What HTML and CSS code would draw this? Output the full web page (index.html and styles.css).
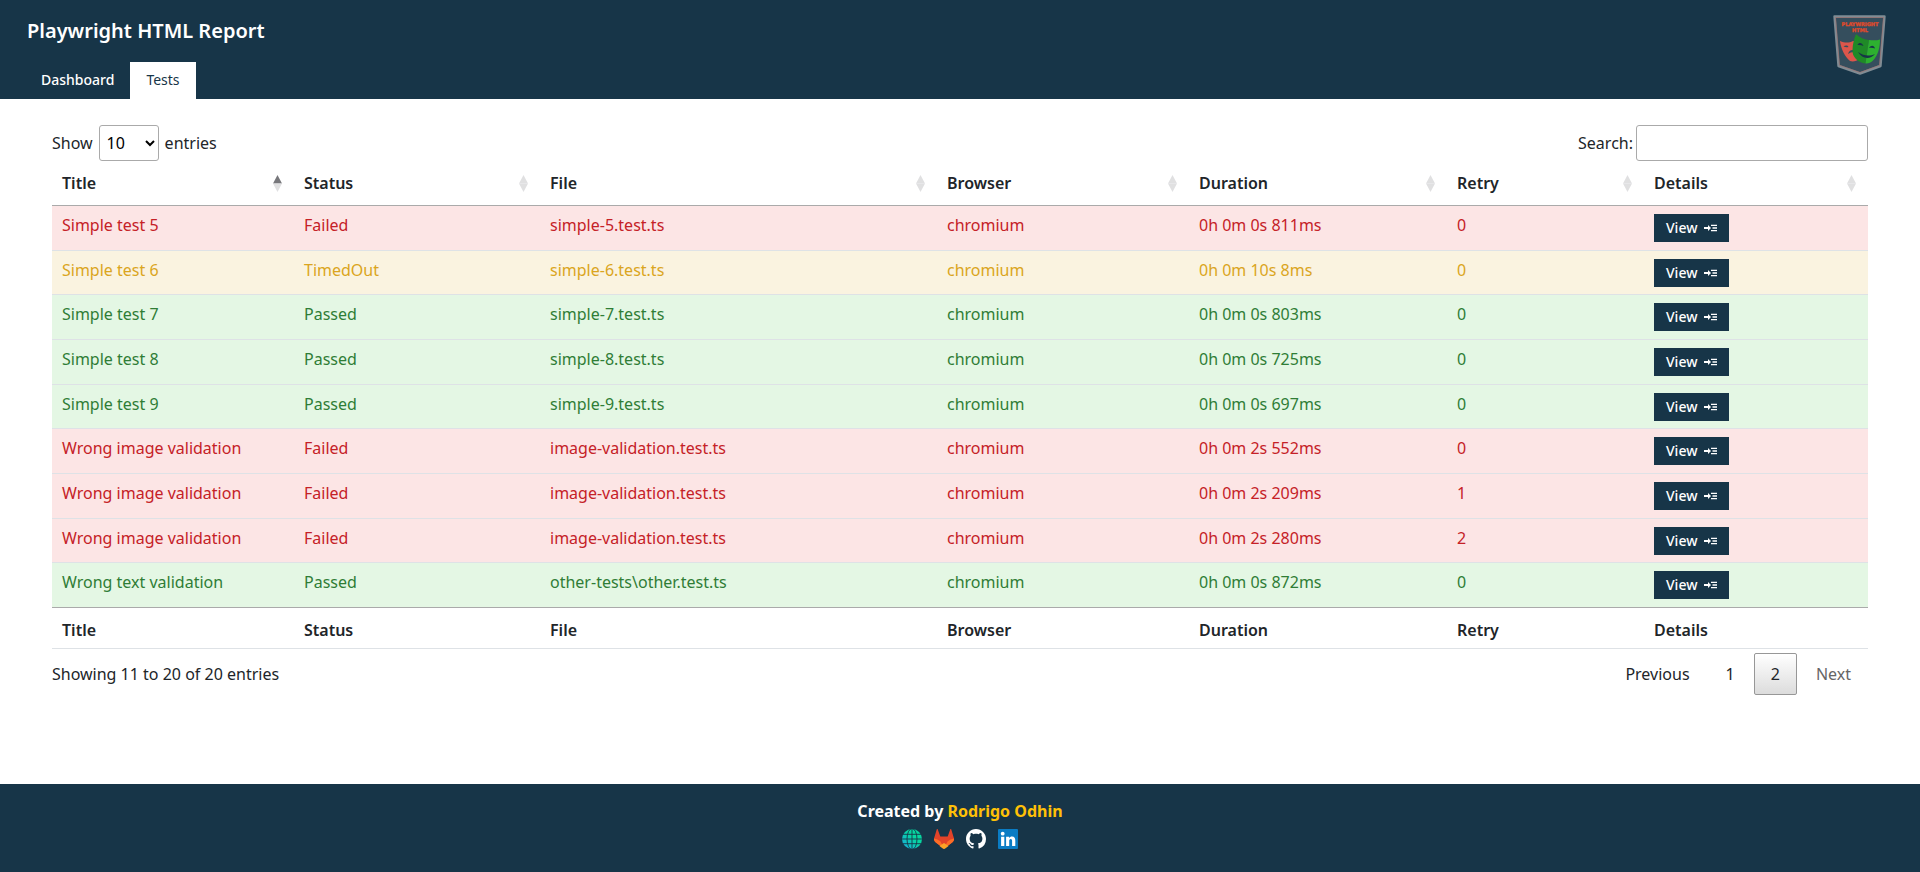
FILE: index.html
```html
<!DOCTYPE html>
<html lang="en">
<head>
<meta charset="utf-8">
<meta name="viewport" content="width=device-width, initial-scale=1">
<title>Playwright HTML Report</title>
<link rel="stylesheet" href="styles.css">
</head>
<body>
<svg class="sprite" aria-hidden="true">
  <symbol id="open" viewBox="0 0 13 8"><path d="M0 3h4V1l3 3-3 3V5H0zM7 .7h6v1.300H7zM8.500 3.350H13v1.300H8.500zM7 6h6v1.300H7z"/></symbol>
  <symbol id="sort" viewBox="0 0 9 17"><path class="up" d="M4.500 0L9 8.500H0z"/><path class="down" d="M0 8.500h9L4.500 17z"/></symbol>
</svg>
<header class="top">
  <div class="top-main">
    <h1 class="brand">Playwright HTML Report</h1>
    <nav class="tabs">
      <a class="tab" href="#dashboard">Dashboard</a>
      <a class="tab active" href="#tests" aria-current="page">Tests</a>
    </nav>
  </div>
  <svg class="logo" viewBox="0 0 54 60" role="img" aria-label="Playwright HTML">
    <path d="M1.500 1.500H51.500L47.500 51 27 58.500 5.500 51z" fill="#354e5d" stroke="#7f8c94" stroke-width="2.400" stroke-linejoin="round"/>
    <path d="M2.500 2.500H50.500L46.500 50.300 27 57.500 6.500 50.300z" fill="none" stroke="#a66f6c" stroke-width=".6"/>
    <text x="27" y="10.500" text-anchor="middle" class="logo-text">PLAYWRIGHT</text>
    <text x="27" y="16.500" text-anchor="middle" class="logo-text">HTML</text>
    <path d="M7 26c5 2 9 2 13 0h3l3 18c-2 2-6 3-9 2C12 42 8 34 7 26z" fill="#dc564b"/>
    <path d="M10.500 31.500c2-1.500 4-1.500 5 .4-2 .5-3 .3-5-.4zM15 39c1-3.500 3-4.500 5.500-4l.5 2c-3 0-4 .8-6 2z" fill="#354e5d"/>
    <path d="M23 19c4 4 8 5.500 13 6l-4 38c.5 0-.5 0 0 0l0-15c-8-2-13-7-13-13 0-6 2-11 4-16z" fill="none"/>
    <path d="M23 19c4 4 8 5.500 13 6l-3.500 23.500C25 47.500 19 42 19.500 35c.2-6 1.500-11 3.500-16z" fill="#1f8a27"/>
    <path d="M36 25c4 .5 8 .5 11-.5 0 8-2 16-7 21-2 2.300-5 3.300-7.500 3z" fill="#2db030"/>
    <path d="M24.500 30c1.500-3 4.500-2.500 6 1-2-1-4-1.300-6-1zM36 33c2-3 5-3 6 .5-2-.8-4-.8-6-.5zM25 37c6 4 11 4.500 17 2-5 6-13 5-17-2z" fill="#173548"/>
  </svg>
</header>

<main class="content">
  <div class="bar">
    <label class="length">Show
      <select class="field"><option>10</option><option>25</option><option>50</option><option>100</option></select>
      entries</label>
    <label class="search">Search:<input class="field" type="search"></label>
  </div>
  <table class="tests">
    <colgroup><col class="c-title"><col class="c-status"><col class="c-file"><col class="c-browser"><col class="c-duration"><col class="c-retry"><col class="c-details"></colgroup>
    <thead>
      <tr>
        <th aria-sort="ascending"><div class="th">Title<svg class="sort asc"><use href="#sort"/></svg></div></th>
        <th><div class="th">Status<svg class="sort"><use href="#sort"/></svg></div></th>
        <th><div class="th">File<svg class="sort"><use href="#sort"/></svg></div></th>
        <th><div class="th">Browser<svg class="sort"><use href="#sort"/></svg></div></th>
        <th><div class="th">Duration<svg class="sort"><use href="#sort"/></svg></div></th>
        <th><div class="th">Retry<svg class="sort"><use href="#sort"/></svg></div></th>
        <th><div class="th">Details<svg class="sort"><use href="#sort"/></svg></div></th>
      </tr>
    </thead>
    <tbody>
      <tr class="failed"><td>Simple test 5</td><td>Failed</td><td>simple-5.test.ts</td><td>chromium</td><td>0h 0m 0s 811ms</td><td>0</td><td><button class="view" type="button">View <svg><use href="#open"/></svg></button></td></tr>
      <tr class="timedout"><td>Simple test 6</td><td>TimedOut</td><td>simple-6.test.ts</td><td>chromium</td><td>0h 0m 10s 8ms</td><td>0</td><td><button class="view" type="button">View <svg><use href="#open"/></svg></button></td></tr>
      <tr class="passed"><td>Simple test 7</td><td>Passed</td><td>simple-7.test.ts</td><td>chromium</td><td>0h 0m 0s 803ms</td><td>0</td><td><button class="view" type="button">View <svg><use href="#open"/></svg></button></td></tr>
      <tr class="passed"><td>Simple test 8</td><td>Passed</td><td>simple-8.test.ts</td><td>chromium</td><td>0h 0m 0s 725ms</td><td>0</td><td><button class="view" type="button">View <svg><use href="#open"/></svg></button></td></tr>
      <tr class="passed"><td>Simple test 9</td><td>Passed</td><td>simple-9.test.ts</td><td>chromium</td><td>0h 0m 0s 697ms</td><td>0</td><td><button class="view" type="button">View <svg><use href="#open"/></svg></button></td></tr>
      <tr class="failed"><td>Wrong image validation</td><td>Failed</td><td>image-validation.test.ts</td><td>chromium</td><td>0h 0m 2s 552ms</td><td>0</td><td><button class="view" type="button">View <svg><use href="#open"/></svg></button></td></tr>
      <tr class="failed"><td>Wrong image validation</td><td>Failed</td><td>image-validation.test.ts</td><td>chromium</td><td>0h 0m 2s 209ms</td><td>1</td><td><button class="view" type="button">View <svg><use href="#open"/></svg></button></td></tr>
      <tr class="failed"><td>Wrong image validation</td><td>Failed</td><td>image-validation.test.ts</td><td>chromium</td><td>0h 0m 2s 280ms</td><td>2</td><td><button class="view" type="button">View <svg><use href="#open"/></svg></button></td></tr>
      <tr class="passed"><td>Wrong text validation</td><td>Passed</td><td>other-tests\other.test.ts</td><td>chromium</td><td>0h 0m 0s 872ms</td><td>0</td><td><button class="view" type="button">View <svg><use href="#open"/></svg></button></td></tr>
    </tbody>
    <tfoot>
      <tr><th>Title</th><th>Status</th><th>File</th><th>Browser</th><th>Duration</th><th>Retry</th><th>Details</th></tr>
    </tfoot>
  </table>
  <div class="bar bar-bottom">
    <span>Showing 11 to 20 of 20 entries</span>
    <nav class="pages" aria-label="Pages">
      <button class="page" type="button">Previous</button>
      <button class="page" type="button">1</button>
      <button class="page current" type="button" aria-current="page">2</button>
      <button class="page" type="button" disabled>Next</button>
    </nav>
  </div>
</main>

<footer class="foot">
  <div class="credit">Created by <a href="#author">Rodrigo Odhin</a></div>
  <div class="social">
    <a href="#site" aria-label="Website"><svg viewBox="0 0 20 20">
      <defs><linearGradient id="g" x1="0" y1="1" x2="1" y2="0"><stop offset="0" stop-color="#1ba9e0"/><stop offset=".6" stop-color="#06d6a0"/></linearGradient></defs>
      <circle cx="10" cy="10" r="10" fill="url(#g)"/>
      <g fill="none" stroke="#173548" stroke-width=".9"><ellipse cx="10" cy="10" rx="5" ry="10.500"/><path d="M10 0v20M0 10h20M1 5.300h18M1 14.700h18"/></g>
    </svg></a>
    <a href="#gitlab" aria-label="GitLab"><svg viewBox="0 0 20 20">
      <path d="M3.700.3L6.300 7.500h7.400L16.300.3c.2-.4.700-.4.900 0L20 9.500c.2 1.500-.3 2.800-1.500 3.700L10 19.800l-8.500-6.600C.3 12.300-.2 11 0 9.500L2.800.3c.2-.4.700-.4.900 0z" fill="#e24329"/>
      <path d="M0 9.500c2.500.3 4.500 1.500 6.500 3L10 19.800l-8.500-6.600C.3 12.300-.2 11 0 9.500zM20 9.500c-2.500.3-4.500 1.500-6.500 3L10 19.800l8.500-6.600c1.200-.9 1.700-2.200 1.500-3.700z" fill="#fc6d26"/>
      <path d="M10 14l4.500 3-3.300 2.500c-.8.600-1.600.6-2.400 0L5.500 17z" fill="#fca326"/>
    </svg></a>
    <a href="#github" aria-label="GitHub"><svg viewBox="0 0 16 16"><path fill="#fff" d="M8 0C3.580 0 0 3.580 0 8c0 3.540 2.290 6.530 5.470 7.590.4.070.55-.17.55-.38 0-.19-.01-.82-.01-1.490-2.010.37-2.530-.49-2.690-.94-.09-.23-.48-.94-.82-1.130-.28-.15-.68-.52-.01-.53.63-.01 1.080.58 1.230.82.720 1.210 1.870.87 2.330.66.070-.52.280-.87.510-1.070-1.780-.2-3.640-.89-3.640-3.950 0-.87.310-1.590.82-2.150-.08-.2-.36-1.020.08-2.120 0 0 .67-.21 2.200.82.640-.18 1.320-.27 2-.27s1.360.09 2 .27c1.530-1.040 2.200-.82 2.200-.82.440 1.100.160 1.920.080 2.120.510.560.820 1.270.820 2.150 0 3.070-1.870 3.750-3.650 3.950.290.250.540.730.540 1.480 0 1.070-.010 1.930-.010 2.200 0 .210.150.460.550.380A8.010 8.010 0 0016 8c0-4.420-3.580-8-8-8z"/></svg></a>
    <a href="#linkedin" aria-label="LinkedIn"><svg viewBox="0 0 20 20"><rect width="20" height="20" rx="1" fill="#0a7cc4"/><circle cx="4.700" cy="4.700" r="1.900" fill="#fff"/><path fill="#fff" d="M3.100 7.800h3.200V17H3.100zM8.100 7.800h3v1.300c.6-1 1.600-1.600 2.900-1.600 2.600 0 3.300 1.700 3.300 4.200V17h-3.200v-4.700c0-1.200-.2-2.200-1.400-2.200s-1.500 1-1.500 2.200V17H8.100z"/></svg></a>
  </div>
</footer>
</body>
</html>
```
FILE: styles.css
```css
* { box-sizing: border-box; }
body {
  margin: 0;
  min-height: 100vh;
  display: flex;
  flex-direction: column;
  background: #fff;
  color: #212529;
  font: 400 16px/24px "Noto Sans", "Open Sans", sans-serif;
}
a { text-decoration: none; }
.sprite { display: none; }

.top {
  display: flex;
  justify-content: space-between;
  align-items: flex-start;
  padding: 15px 33px 0 27px;
  background: #173548;
  color: #fff;
}
.brand { margin: 0; font-size: 20px; line-height: 32px; font-weight: 600; }
.tabs { display: flex; margin-top: 15px; }
.tab { padding: 8px 16px 9px; color: #fff; font-size: 14px; line-height: 20px; font-weight: 500; }
.tab:first-child { padding-left: 14px; }
.tab.active { background: #fff; color: #173548; font-weight: 400; }
.logo { width: 54px; height: 60px; }
.logo-text { font: 700 5px "DejaVu Sans", sans-serif; fill: #e04a2a; stroke: #e04a2a; stroke-width: 0.3; }

.content { flex: 1; padding: 26px 52px; }
.bar { display: flex; justify-content: space-between; align-items: center; }
.bar label { display: flex; align-items: center; }
.length { gap: 6px; }
.search { gap: 3px; }
.field {
  height: 36px;
  padding: 5px;
  border: 1px solid #aaa;
  border-radius: 3px;
  background: transparent;
  font: inherit;
  color: #000;
}
select.field { width: 60px; padding: 4px 4px 4px 3px; }
input.field { width: 232px; }

.tests { width: 100%; table-layout: fixed; border-collapse: separate; border-spacing: 0; }
.c-title { width: 242px; }
.c-status { width: 246px; }
.c-file { width: 397px; }
.c-browser { width: 252px; }
.c-duration { width: 258px; }
.c-retry { width: 197px; }
.c-details { width: 224px; }
.tests th { text-align: left; font-weight: 600; }
thead th { padding: 10px 12px 10px 10px; border-bottom: 1px solid #aaa; }
.th { display: flex; justify-content: space-between; align-items: center; }
.sort { width: 9px; height: 17px; fill: #e0e0e1; }
.sort.asc { fill: #77777b; }
.down { fill: #e0e0e1; }
.tests td { padding: 7px 10px; border-bottom: 1px solid #dee2e6; vertical-align: top; }
tbody tr { height: 45px; }
tbody tr:nth-child(3n+2) { height: 44px; }
tbody tr:last-child td { border-bottom-color: #aaa; }
.failed { background: #fce5e5; color: #c52127; }
.timedout { background: #faf3e0; color: #daa520; }
.passed { background: #e4f7e4; color: #2f7d36; }
tfoot th { padding: 10px 10px 6px; border-bottom: 1px solid #dee2e6; }
.view {
  display: flex;
  align-items: center;
  gap: 7px;
  height: 28px;
  margin-top: 1px;
  padding: 0 12px;
  border: 0;
  background: #173548;
  color: #fff;
  font: 500 14px/20px "Noto Sans", sans-serif;
}
.view svg { width: 13px; height: 8px; fill: #fff; }

.bar-bottom { padding-top: 4px; }
.pages { display: flex; gap: 2px; }
.page {
  min-width: 43px;
  height: 42px;
  padding: 0 16px;
  border: 1px solid transparent;
  border-radius: 2px;
  background: none;
  color: #212529;
  font: inherit;
}
.page.current { border-color: #979797; background: linear-gradient(#fff, #dcdcdc); }
.page:disabled { color: #666; }

.foot { padding: 15px 0 23px; background: #173548; color: #fff; text-align: center; }
.credit { font-weight: 700; }
.credit a { color: #ffc107; }
.social { display: flex; justify-content: center; gap: 12px; margin-top: 6px; }
.social svg { display: block; width: 20px; height: 20px; }
```
